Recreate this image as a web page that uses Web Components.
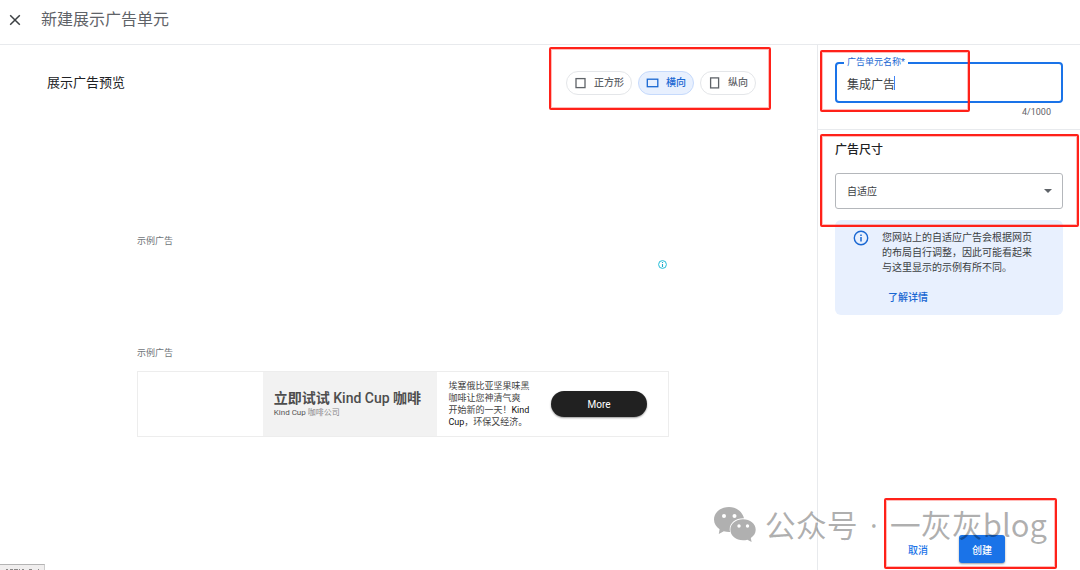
<!DOCTYPE html>
<html lang="zh-CN">
<head>
<meta charset="utf-8">
<meta name="viewport" content="width=device-width, initial-scale=1">
<title>新建展示广告单元</title>
<style>
html, body { margin: 0; height: 100%; }
body { font-family: Roboto, "Noto Sans CJK SC", sans-serif; color: #3c4043; background: #fff; overflow: hidden; }
</style>
</head>
<body>
<ad-unit-page></ad-unit-page>
<script>
const define = (name, html, setup) => customElements.define(name, class extends HTMLElement {
  constructor() {
    super();
    const t = document.createElement('template');
    t.innerHTML = '<style>*{box-sizing:border-box}button,input,select{font-family:inherit;margin:0}</style>' + html;
    this.attachShadow({ mode: 'open' }).append(t.content.cloneNode(true));
  }
  connectedCallback() { if (setup) setup(this, this.shadowRoot); }
});

/* red marker frame laid over whatever region it is put in */
define('mark-frame', `<style>
:host { position: absolute; z-index: 3; box-sizing: border-box; border: 2px solid #ff2119; outline: 1px solid rgba(255,33,25,.3); outline-offset: -3px; border-radius: 2px; pointer-events: none; }
</style>`);

define('page-header', `<style>
:host { display: flex; align-items: center; gap: 19px; height: 45px; padding: 0 7px 4px; box-sizing: border-box; border-bottom: 1px solid #e8eaed; flex: none; }
button { width: 15px; height: 15px; padding: 0; border: 0; background: none; display: grid; place-items: center; color: #3c4043; }
h1 { margin: 0; font-size: 16px; line-height: 24px; font-weight: 400; color: #5f6368; }
</style>
<button aria-label="关闭"><svg width="12" height="12" viewBox="0 0 12 12"><path d="M1.200 1.200l9.600 9.600M10.800 1.200L1.200 10.800" stroke="currentColor" stroke-width="1.500"/></svg></button>
<h1><slot></slot></h1>`);

define('shape-chip', `<style>
:host { display: block; }
button { display: flex; align-items: center; gap: 6px; height: 24px; padding: 0 7px; border: 1px solid #e4e6e9; border-radius: 12px; background: #fff; color: #5f6368; font-size: 10px; line-height: 16px; font-weight: 500; white-space: nowrap; }
:host([selected]) button { background: #e8f0fe; border-color: #c6dafc; color: #1967d2; }
svg { display: block; }
</style>
<button><svg width="14" height="14" viewBox="0 0 14 14"><rect fill="none" stroke="currentColor" stroke-width="1.300"/></svg><slot></slot></button>`,
(el, root) => {
  const box = { square: [2, 2.6, 9, 9], wide: [1.3, 3.2, 10.5, 7.5], tall: [2.6, 1.9, 8, 10] }[el.getAttribute('shape')];
  const r = root.querySelector('rect');
  ['x', 'y', 'width', 'height'].forEach((k, i) => r.setAttribute(k, box[i]));
  root.querySelector('button').setAttribute('aria-pressed', el.hasAttribute('selected'));
});

define('sample-ad', `<style>
:host { display: grid; grid-template-columns: 125fr 175fr 231fr; height: 66px; border: 1px solid #ededed; box-sizing: border-box; }
.brand { background: #f2f2f2; padding: 16px 0 0 11px; white-space: nowrap; }
h3 { margin: 0; font-size: 14px; line-height: 20px; font-weight: 700; color: #4d4d4d; }
h3 span { font-weight: 500; }
.brand p { margin: 0; font-size: 8px; line-height: 10px; color: #8a8a8a; }
.brand p span { color: #555; }
.copy { display: flex; align-items: center; justify-content: space-between; padding: 0 21px 0 11px; }
.copy p { margin: 0; font-size: 9px; line-height: 12px; color: #444; white-space: nowrap; }
b { font-weight: 400; color: #111; }
button { width: 96px; height: 26px; padding: 0; border: 0; border-radius: 13px; background: #212121; color: #fff; font-size: 10px; box-shadow: 0 1px 2px rgba(0,0,0,.4); flex: none; }
</style>
<div></div>
<div class="brand"><h3>立即试试 <span>Kind Cup</span> 咖啡</h3><p><span>Kind Cup</span> 咖啡公司</p></div>
<div class="copy"><p>埃塞俄比亚坚果味黑<br>咖啡让您神清气爽<br>开始新的一天！<b>Kind<br>Cup</b>，环保又经济。</p><button>More</button></div>`);

define('ad-preview', `<style>
:host { display: block; min-width: 0; padding: 26px 61px 0 47px; }
.bar { display: flex; align-items: center; justify-content: space-between; height: 24px; }
h2 { margin: 0; font-size: 13px; line-height: 20px; font-weight: 400; color: #202124; }
.chips { position: relative; display: flex; gap: 6px; }
.chips mark-frame { inset: -24px -15px -15px -17px; }
.samples { margin: 0 87px 0 90px; padding-top: 139px; }
.label { margin: 0; font-size: 9px; line-height: 14px; color: #70757a; }
.blank { display: flex; justify-content: flex-end; height: 98px; padding: 12px 2px 0; }
sample-ad { margin-top: 11px; }
</style>
<div class="bar"><h2>展示广告预览</h2>
<div class="chips"><shape-chip shape="square">正方形</shape-chip><shape-chip shape="wide" selected>横向</shape-chip><shape-chip shape="tall">纵向</shape-chip><mark-frame></mark-frame></div></div>
<div class="samples">
<p class="label">示例广告</p>
<div class="blank"><svg width="9" height="9" viewBox="0 0 9 9"><circle cx="4.500" cy="4.500" r="3.900" fill="none" stroke="#22bcd8" stroke-width="1"/><path d="M4.500 4v3M4.500 2v1" stroke="#22a9c8" stroke-width="1.100"/></svg></div>
<p class="label">示例广告</p>
<sample-ad></sample-ad>
</div>`);

define('name-field', `<style>
:host { display: block; }
.box { position: relative; }
label { position: absolute; left: 9px; top: -7px; padding: 0 3px; background: #fff; font-size: 9px; line-height: 14px; color: #1967d2; }
input { display: block; width: 100%; height: 41px; padding: 2px 10px 0; border: 2px solid #1a73e8; border-radius: 4px; background: #fff; font-size: 12px; color: #3c4043; outline: 0; }
.caret { position: absolute; left: 59px; top: 14px; width: 1px; height: 14px; background: #4285f4; }
.count { margin: 2px 12px 0; text-align: right; font-size: 9px; line-height: 14px; color: #5f6368; }
</style>
<div class="box"><input id="name" value="集成广告"><label for="name">广告单元名称*</label><span class="caret"></span></div>
<div class="count">4/1000</div>`);

define('size-field', `<style>
:host { display: block; }
label { display: block; font-size: 12px; line-height: 18px; font-weight: 500; color: #202124; }
.box { position: relative; margin-top: 14px; }
select { display: block; appearance: none; width: 100%; height: 36px; padding: 0 11px; border: 1px solid #b4b7bb; border-radius: 3px; background: #fff; font-size: 10px; color: #3c4043; }
svg { position: absolute; right: 11px; top: 16px; pointer-events: none; }
</style>
<label for="size">广告尺寸</label>
<div class="box"><select id="size"><option>自适应</option></select><svg width="8" height="4" viewBox="0 0 8 4"><path d="M0 0h8L4 4z" fill="#5f6368"/></svg></div>`);

define('info-note', `<style>
:host { display: flex; align-items: flex-start; gap: 13px; box-sizing: border-box; padding: 10px 24px 10px 18px; border-radius: 6px; background: #e8f0fe; }
svg { flex: none; }
p { margin: 0; font-size: 10px; line-height: 15px; color: #3c4043; }
a { display: inline-block; margin: 15px 0 0 6px; font-size: 10px; line-height: 15px; font-weight: 500; color: #1967d2; text-decoration: none; }
</style>
<svg width="16" height="16" viewBox="0 0 16 16"><circle cx="8" cy="8" r="6.700" fill="none" stroke="#1967d2" stroke-width="1.400"/><path d="M8 7v4.500M8 4.500V6" stroke="#1967d2" stroke-width="1.500"/></svg>
<div><p><slot></slot></p><a href="#">了解详情</a></div>`);

define('form-actions', `<style>
:host { position: relative; display: flex; justify-content: flex-end; gap: 18px; padding: 0 75px 7px 0; }
button { height: 28px; padding: 0 13px; border: 0; border-radius: 3px; background: none; color: #1a73e8; font-size: 10px; font-weight: 500; }
.primary { background: #1a73e8; color: #fff; box-shadow: 0 1px 2px rgba(60,64,67,.5); }
mark-frame { right: 23px; bottom: 1px; width: 173px; height: 71px; }
</style>
<button>取消</button><button class="primary">创建</button><mark-frame></mark-frame>`);

define('settings-panel', `<style>
:host { display: flex; flex-direction: column; border-left: 1px solid #e8eaed; box-sizing: border-box; }
section { position: relative; padding: 17px 17px 0; }
.name { height: 85px; border-bottom: 1px solid #e8eaed; }
section.size { padding-top: 11px; }
info-note { margin-top: 11px; }
.name mark-frame { left: 2px; top: 5px; width: 150px; height: 62px; }
.size mark-frame { left: 2px; top: 4px; width: 259px; height: 93px; }
form-actions { margin-top: auto; }
</style>
<section class="name"><name-field></name-field><mark-frame></mark-frame></section>
<section class="size"><size-field></size-field><info-note>您网站上的自适应广告会根据网页的布局自行调整，因此可能看起来与这里显示的示例有所不同。</info-note><mark-frame></mark-frame></section>
<form-actions></form-actions>`);

define('account-watermark', `<style>
:host { position: absolute; right: 33px; bottom: 23px; z-index: 2; display: flex; align-items: center; gap: 9px; color: rgba(0,0,0,.31); font-size: 31px; line-height: 44px; white-space: nowrap; font-family: "Noto Sans CJK SC", sans-serif; pointer-events: none; }
i { font-style: normal; font-family: "Open Sans", sans-serif; padding: 0 5px; }
</style>
<svg width="42" height="35" viewBox="0 0 42 35"><g fill="#b0b0b0"><path d="M15 0C6.700 0 0 5.500 0 12.500c0 4 2.200 7.400 5.600 9.700L4.800 27l5-2.700c1.700.5 3.500.7 5.300.7h1C14 17 21 11 30 11.300 28.500 4.800 22.500 0 15 0z"/><path d="M29 12.300c-7 0-12.600 4.600-12.600 10.500S22 33.300 29 33.300c1.500 0 3-.2 4.400-.6l4.200 2.300-.8-4c3-1.900 4.900-4.900 4.900-8.200 0-5.900-5.700-10.500-12.700-10.500z"/></g><g fill="#fff"><circle cx="10" cy="9" r="2"/><circle cx="20.500" cy="9" r="2"/><circle cx="25" cy="19" r="1.700"/><circle cx="33.500" cy="19" r="1.700"/></g></svg>
<span>公众号 <i>·</i> 一灰灰blog</span>`);

define('ad-unit-page', `<style>
:host { position: relative; display: flex; flex-direction: column; height: 100vh; overflow: hidden; }
main { flex: 1; display: grid; grid-template-columns: minmax(0, 1fr) 263px; min-height: 0; }
.status { position: absolute; left: 0; bottom: 0; width: 45px; height: 6px; box-sizing: border-box; border-top: 1px solid #b4b4b4; border-right: 1px solid #ccc; background: #f0eeee; }
.status svg { display: block; margin-top: 4px; }
</style>
<page-header>新建展示广告单元</page-header>
<main><ad-preview></ad-preview><settings-panel></settings-panel></main>
<account-watermark></account-watermark>
<div class="status"><svg width="44" height="1" viewBox="0 0 44 1"><path d="M6 .5h2M10 .5h3M14 .5h4M19 .5h1M22 .5h2M29 .5h3M38 .5h1" stroke="#8a8888"/></svg></div>`);
</script>
</body>
</html>
